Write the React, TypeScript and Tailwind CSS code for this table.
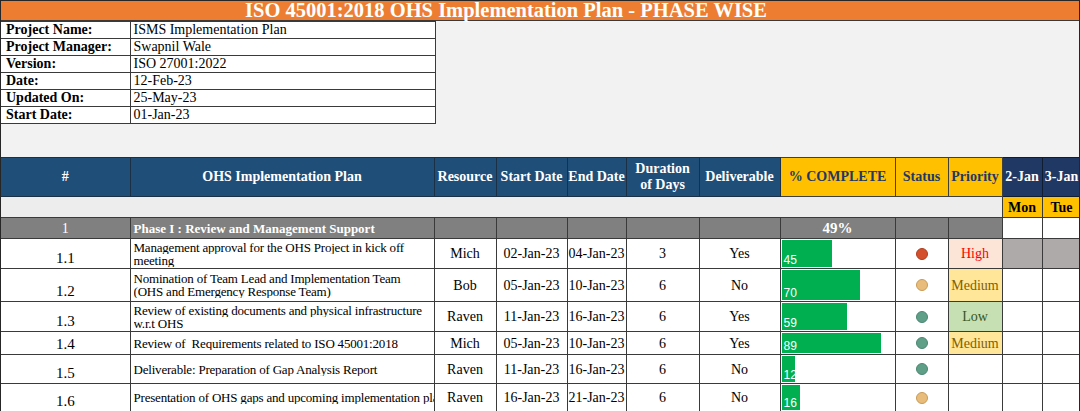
import React from "react";

const serif = "font-['Liberation_Serif','Times_New_Roman',serif]";

const info = [
  ["Project Name:", "ISMS Implementation Plan"],
  ["Project Manager:", "Swapnil Wale"],
  ["Version:", "ISO 27001:2022"],
  ["Date:", "12-Feb-23"],
  ["Updated On:", "25-May-23"],
  ["Start Date:", "01-Jan-23"],
];

interface Task {
  id: string;
  lines: string[];
  res: string;
  start: string;
  end: string;
  dur: number;
  del: string;
  pct: number;
  status: "red" | "amber" | "green";
  priority: "" | "High" | "Medium" | "Low";
  h: number;
  shaded?: boolean;
}

const tasks: Task[] = [
  { id: "1.1", lines: ["Management approval for the OHS Project in kick off", "meeting"], res: "Mich", start: "02-Jan-23", end: "04-Jan-23", dur: 3, del: "Yes", pct: 45, status: "red", priority: "High", h: 30, shaded: true },
  { id: "1.2", lines: ["Nomination of Team Lead and Implementation Team", "(OHS and Emergency Response Team)"], res: "Bob", start: "05-Jan-23", end: "10-Jan-23", dur: 6, del: "No", pct: 70, status: "amber", priority: "Medium", h: 33 },
  { id: "1.3", lines: ["Review of existing documents and physical infrastructure", "w.r.t OHS"], res: "Raven", start: "11-Jan-23", end: "16-Jan-23", dur: 6, del: "Yes", pct: 59, status: "green", priority: "Low", h: 30 },
  { id: "1.4", lines: ["Review of\u00a0 Requirements related to ISO 45001:2018"], res: "Mich", start: "05-Jan-23", end: "10-Jan-23", dur: 6, del: "Yes", pct: 89, status: "green", priority: "Medium", h: 23 },
  { id: "1.5", lines: ["Deliverable: Preparation of Gap Analysis Report"], res: "Raven", start: "11-Jan-23", end: "16-Jan-23", dur: 6, del: "No", pct: 12, status: "green", priority: "", h: 29 },
  { id: "1.6", lines: ["Presentation of OHS gaps and upcoming implementation plan"], res: "Raven", start: "16-Jan-23", end: "21-Jan-23", dur: 6, del: "No", pct: 16, status: "amber", priority: "", h: 28 },
];

const dotClass = {
  red: "bg-[#d4502c] border-[#b03c1c]",
  amber: "bg-[#e8bd7c] border-[#c99a55]",
  green: "bg-[#5f9f88] border-[#4a8672]",
};

const priorityClass = {
  "": "bg-white",
  High: "bg-[#fce4d6] text-[#ff0000]",
  Medium: "bg-[#ffe699] text-[#7f6000]",
  Low: "bg-[#c6e0b4] text-[#375623]",
};

const cols = [129, 304, 62, 71, 59, 73, 81, 115, 53, 54, 40, 39];

const cell = "border border-[#3a3a3a] p-0";

export default function App() {
  return (
    <div className={`w-[1080px] h-[411px] overflow-hidden bg-[#f2f2f2] border-x border-t border-[#262626] ${serif}`}>
      {/* title */}
      <div className="h-[20px] bg-[#ed7d31] border-b border-[#3a3a3a] flex items-center justify-center pr-[68px]">
        <span className="text-white font-bold text-[20.5px] leading-none">
          ISO 45001:2018 OHS Implementation Plan - PHASE WISE
        </span>
      </div>

      {/* project info */}
      <table className="table-fixed border-collapse w-[434px] bg-white text-[14px] text-black">
        <colgroup>
          <col className="w-[129px]" />
          <col className="w-[305px]" />
        </colgroup>
        <tbody>
          {info.map(([k, v]) => (
            <tr key={k} className="h-[17px]">
              <td className={`${cell} border-l-0 pl-[5px] font-bold leading-none align-bottom pb-[1px] whitespace-nowrap`}>{k}</td>
              <td className={`${cell} pl-[3px] leading-none align-bottom pb-[1px]`}>{v}</td>
            </tr>
          ))}
        </tbody>
      </table>

      <div className="h-[33px]" />

      {/* plan table */}
      <table className="table-fixed border-collapse w-[1079px] text-[14px] leading-[15px] text-black">
        <colgroup>
          {cols.map((w, i) => (
            <col key={i} style={{ width: w }} />
          ))}
        </colgroup>
        <tbody>
          <tr className="h-[39px] font-bold text-center leading-[16px] text-[14px]">
            {["#", "OHS Implementation Plan", "Resource", "Start Date", "End Date"].map((t) => (
              <td key={t} className="bg-[#1f4e79] text-white border border-[#1b2f45] border-l-0 p-0 whitespace-nowrap">{t}</td>
            ))}
            <td className="bg-[#1f4e79] text-white border border-[#1b2f45] p-0">Duration<br />of Days</td>
            <td className="bg-[#1f4e79] text-white border border-[#1b2f45] p-0">Deliverable</td>
            <td className="bg-[#ffc000] text-[#1f3864] border border-[#404040] p-0">% COMPLETE</td>
            <td className="bg-[#ffc000] text-[#1f3864] border border-[#404040] p-0">Status</td>
            <td className="bg-[#ffc000] text-[#1f3864] border border-[#404040] p-0">Priority</td>
            <td className="bg-[#203864] text-white border border-[#101c30] p-0 whitespace-nowrap">2-Jan</td>
            <td className="bg-[#203864] text-white border border-[#101c30] p-0 whitespace-nowrap">3-Jan</td>
          </tr>

          <tr className="h-[21px] bg-[#ededed]">
            <td colSpan={10} className="border-b border-[#3a3a3a] p-0" />
            <td className={`${cell} bg-[#ffc000] text-center font-bold`}>Mon</td>
            <td className={`${cell} bg-[#ffc000] text-center font-bold`}>Tue</td>
          </tr>

          <tr className="h-[21px] bg-[#808080] text-white">
            <td className={`${cell} border-l-0 text-center`}>1</td>
            <td className={`${cell} pl-[3px] font-bold text-[13px] whitespace-nowrap`}>Phase I : Review and Management Support</td>
            <td className={cell} />
            <td className={cell} />
            <td className={cell} />
            <td className={cell} />
            <td className={cell} />
            <td className={`${cell} text-center font-bold text-[15px]`}>49%</td>
            <td className={cell} />
            <td className={cell} />
            <td className={`${cell} bg-white`} />
            <td className={`${cell} bg-white`} />
          </tr>

          {tasks.map((t) => (
            <tr key={t.id} className="bg-white" style={{ height: t.h }}>
              <td className={`${cell} border-l-0 text-center align-bottom pb-[2px] text-[15px]`}>{t.id}</td>
              <td className={`${cell} pl-[3px] leading-[13px] text-[13px] tracking-[-0.2px] whitespace-nowrap`}>
                {t.lines.map((l, i) => (
                  <div key={i} className="overflow-hidden">{l}</div>
                ))}
              </td>
              <td className={`${cell} text-center`}>{t.res}</td>
              <td className={`${cell} text-center`}>{t.start}</td>
              <td className={`${cell} text-center`}>{t.end}</td>
              <td className={`${cell} text-center`}>{t.dur}</td>
              <td className={`${cell} text-center`}>{t.del}</td>
              <td className={`${cell} align-top`}>
                <div className="pt-[1px] pl-[1px]">
                  <div
                    className="bg-[#00b050] flex items-end pl-[2px] font-['Liberation_Sans',Arial,sans-serif] text-[12px] leading-[14px] text-white"
                    style={{ width: Math.round(t.pct * 1.11), height: t.h - 3 }}
                  >
                    {t.pct}
                  </div>
                </div>
              </td>
              <td className={cell}>
                <div className="flex justify-center">
                  <span className={`block w-[12px] h-[12px] rounded-full border ${dotClass[t.status]}`} />
                </div>
              </td>
              <td className={`${cell} text-center ${priorityClass[t.priority]}`}>{t.priority}</td>
              <td className={`${cell} ${t.shaded ? "bg-[#aeaaaa]" : ""}`} />
              <td className={`${cell} ${t.shaded ? "bg-[#aeaaaa]" : ""}`} />
            </tr>
          ))}
        </tbody>
      </table>
    </div>
  );
}
